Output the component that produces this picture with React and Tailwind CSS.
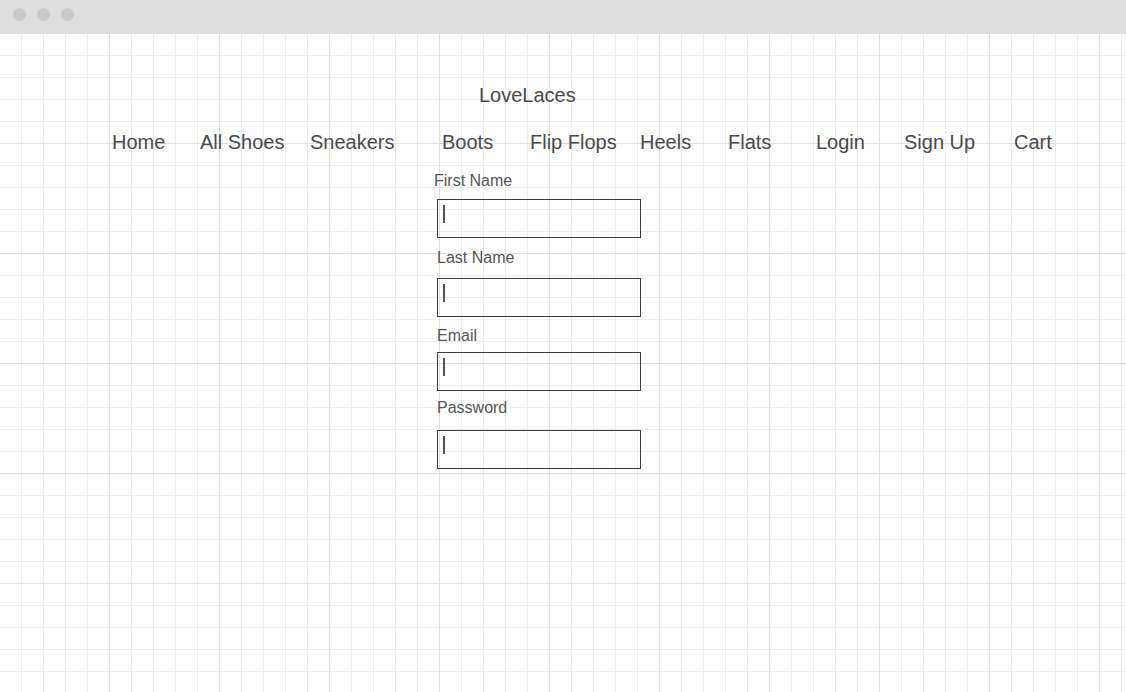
import React from "react";

const navItems = [
  { label: "Home", w: "w-[88px]" },
  { label: "All Shoes", w: "w-[110px]" },
  { label: "Sneakers", w: "w-[132px]" },
  { label: "Boots", w: "w-[88px]" },
  { label: "Flip Flops", w: "w-[110px]" },
  { label: "Heels", w: "w-[88px]" },
  { label: "Flats", w: "w-[88px]" },
  { label: "Login", w: "w-[88px]" },
  { label: "Sign Up", w: "w-[110px]" },
  { label: "Cart", w: "w-[80px]" },
];

function Field({ box }) {
  return (
    <div className={"relative w-[204px] h-[39px] border border-[#3c3c3c] " + box}>
      <span className="absolute left-[5px] top-[5px] w-[2px] h-[18px] bg-[#555555]" />
    </div>
  );
}

export default function App() {
  return (
    <div className="w-full h-[692px] flex flex-col bg-white overflow-hidden font-['Liberation_Sans',Arial,sans-serif]">
      <div className="h-[33px] shrink-0 bg-[#dddddd] flex items-start pt-[8px] pl-[13px] gap-[11px]">
        <span className="w-[13px] h-[13px] rounded-full bg-[#c9c9c9]" />
        <span className="w-[13px] h-[13px] rounded-full bg-[#c9c9c9]" />
        <span className="w-[13px] h-[13px] rounded-full bg-[#c9c9c9]" />
      </div>
      <div className="flex-1 flex flex-col bg-[linear-gradient(to_right,#e0e0e0_1px,transparent_1px),linear-gradient(to_bottom,#e0e0e0_1px,transparent_1px),linear-gradient(to_right,#ececec_1px,transparent_1px),linear-gradient(to_bottom,#ececec_1px,transparent_1px)] bg-[size:110px_110px,110px_110px,22px_22px,22px_22px] bg-[position:109px_0,0_0,21px_0,0_0]">
        <div className="mt-[51px] pl-[479px] text-[20px] leading-[23px] text-[#4a4a4a]">LoveLaces</div>
        <nav className="mt-[24px] pl-[112px] flex text-[20px] leading-[23px] text-[#4a4a4a]">
          {navItems.map((n) => (
            <span key={n.label} className={n.w + " shrink-0 whitespace-nowrap"}>
              {n.label}
            </span>
          ))}
        </nav>
        <div className="pl-[437px] flex flex-col items-start text-[16px] leading-[18px] text-[#555555]">
          <label className="mt-[18px] -ml-[3px]">First Name</label>
          <Field box="mt-[9px]" />
          <label className="mt-[11px]">Last Name</label>
          <Field box="mt-[11px]" />
          <label className="mt-[10px]">Email</label>
          <Field box="mt-[7px]" />
          <label className="mt-[8px]">Password</label>
          <Field box="mt-[13px]" />
        </div>
      </div>
    </div>
  );
}
